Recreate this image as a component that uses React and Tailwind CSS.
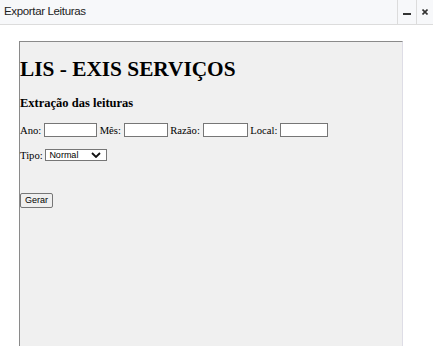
export default function App() {
  return (
    <div className="w-[433px] h-[354px] bg-white overflow-hidden flex flex-col">
      <div className="h-[25px] flex items-stretch bg-[#f7f8fa] border-b border-[#dcdcdc]">
        <div className="flex-1 flex items-center pl-[4px] text-[11.5px] tracking-[-0.35px] text-[#222] font-['Liberation_Sans',sans-serif]">
          Exportar Leituras
        </div>
        <div className="w-[19px] flex items-center justify-center border-l border-[#dcdcdc]">
          <div className="w-[8px] h-[2px] bg-[#333] mt-[3px]" />
        </div>
        <div className="w-[17px] flex items-center justify-center border-l border-[#dcdcdc]">
          <svg width="6" height="6" viewBox="0 0 6 6">
            <path d="M0.5 0.5 L5.5 5.5 M5.5 0.5 L0.5 5.5" stroke="#333" strokeWidth="1.6" />
          </svg>
        </div>
      </div>

      <div className="ml-[19px] mt-[16px] w-[384px] h-[305px] bg-[#f0f0f0] border-l border-t border-[#8a8a8a] border-r border-r-[#dedde6] font-['Liberation_Serif',serif] text-black">
        <h1 className="mt-[15px] text-[21.33px] leading-[24px] font-bold">LIS - EXIS SERVIÇOS</h1>
        <h3 className="mt-[15px] text-[12.5px] leading-[15px] font-bold">Extração das leituras</h3>

        <div className="mt-[12px] h-[14px] flex items-center text-[10.67px] leading-[14px]">
          <span>Ano:</span>
          <input className="ml-[2.67px] w-[53px] h-[14px] bg-white border border-[#767676]" />
          <span className="ml-[2.67px]">Mês:</span>
          <input className="ml-[2.67px] w-[44px] h-[14px] bg-white border border-[#767676]" />
          <span className="ml-[2.67px]">Razão:</span>
          <input className="ml-[2.67px] w-[45px] h-[14px] bg-white border border-[#767676]" />
          <span className="ml-[2.67px]">Local:</span>
          <input className="ml-[2.67px] w-[48px] h-[14px] bg-white border border-[#767676]" />
        </div>

        <div className="mt-[12px] h-[12px] flex items-center text-[10.67px] leading-[14px]">
          <span>Tipo:</span>
          <div className="ml-[2.67px] w-[62px] h-[12px] bg-white border border-[#767676] flex items-center justify-between pl-[3px] pr-[5px]">
            <span className="text-[9px] leading-[10px] font-['Liberation_Sans',sans-serif]">Normal</span>
            <svg width="10" height="6" viewBox="0 0 10 6">
              <path d="M1 1 L5 5 L9 1" fill="none" stroke="#111" strokeWidth="1.8" />
            </svg>
          </div>
        </div>

        <button className="mt-[32px] w-[33px] h-[15px] bg-[#efefef] border border-[#767676] rounded-[2px] text-[9px] leading-[13px] font-['Liberation_Sans',sans-serif] text-black flex items-center justify-center">
          Gerar
        </button>
      </div>
    </div>
  )
}
